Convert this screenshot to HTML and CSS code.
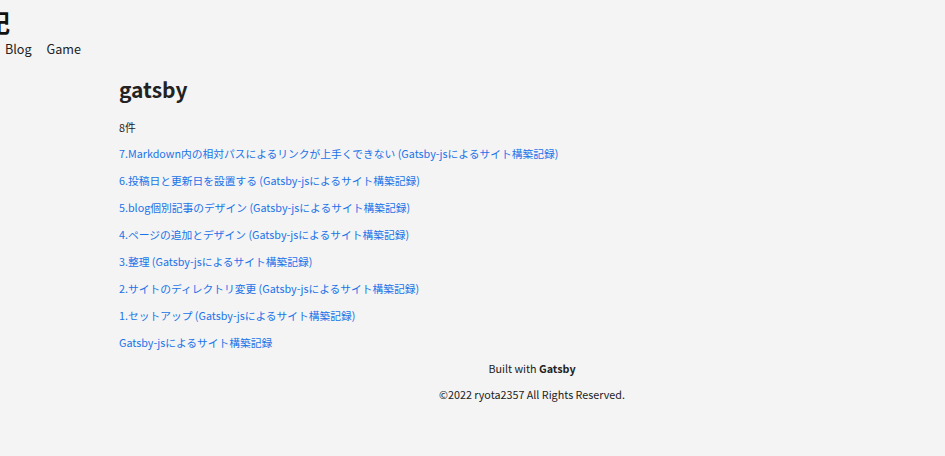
FILE: index.html
```html
<!DOCTYPE html>
<html lang="ja">
<head>
<meta charset="utf-8">
<title>gatsby</title>
<link rel="stylesheet" href="styles.css">
</head>
<body>
<header class="site-header">
  <div class="site-title">日記</div>
  <nav class="site-nav">
    <a href="#">Blog</a>
    <a href="#">Game</a>
  </nav>
</header>
<div class="page">
  <main class="content">
    <h1 class="tag-title">gatsby</h1>
    <p class="count">8件</p>
    <ul class="post-list">
      <li><a href="#">7.Markdown内の相対パスによるリンクが上手くできない (Gatsby-jsによるサイト構築記録)</a></li>
      <li><a href="#">6.投稿日と更新日を設置する (Gatsby-jsによるサイト構築記録)</a></li>
      <li><a href="#">5.blog個別記事のデザイン (Gatsby-jsによるサイト構築記録)</a></li>
      <li><a href="#">4.ページの追加とデザイン (Gatsby-jsによるサイト構築記録)</a></li>
      <li><a href="#">3.整理 (Gatsby-jsによるサイト構築記録)</a></li>
      <li><a href="#">2.サイトのディレクトリ変更 (Gatsby-jsによるサイト構築記録)</a></li>
      <li><a href="#">1.セットアップ (Gatsby-jsによるサイト構築記録)</a></li>
      <li><a href="#">Gatsby-jsによるサイト構築記録</a></li>
    </ul>
  </main>
  <footer class="site-footer">
    <p>Built with <b>Gatsby</b></p>
    <p>©2022 ryota2357 All Rights Reserved.</p>
  </footer>
</div>
</body>
</html>
```

FILE: styles.css
```css
html, body {
  margin: 0;
  padding: 0;
  background: #f4f4f4;
  color: #222;
  font-family: "Noto Sans CJK JP", "Noto Sans", sans-serif;
}
a { text-decoration: none; }
.site-header {
  padding-top: 8px;
}
.site-title {
  font-size: 24px;
  font-weight: 700;
  line-height: 28px;
  margin-left: -38px;
  color: #111;
}
.site-nav {
  display: flex;
  gap: 15px;
  margin-top: 3px;
  padding-left: 5px;
  font-size: 12.6px;
  line-height: 20px;
}
.site-nav a { color: #222; }
.page {
  padding-left: 119px;
}
.tag-title {
  margin: 15px 0 0;
  font-size: 21px;
  line-height: 30px;
  font-weight: 700;
}
.count {
  margin: 15px 0 0;
  font-size: 10.8px;
  line-height: 16px;
}
.post-list {
  list-style: none;
  margin: 11px 0 0;
  padding: 0;
  display: flex;
  flex-direction: column;
  gap: 11px;
}
.post-list li {
  font-size: 10.75px;
  line-height: 16px;
}
.post-list a { color: #1a73e8; }
.site-footer {
  text-align: center;
  font-size: 10.75px;
  line-height: 16px;
  margin-top: 10px;
}
.site-footer p { margin: 0 0 10px; }
```
